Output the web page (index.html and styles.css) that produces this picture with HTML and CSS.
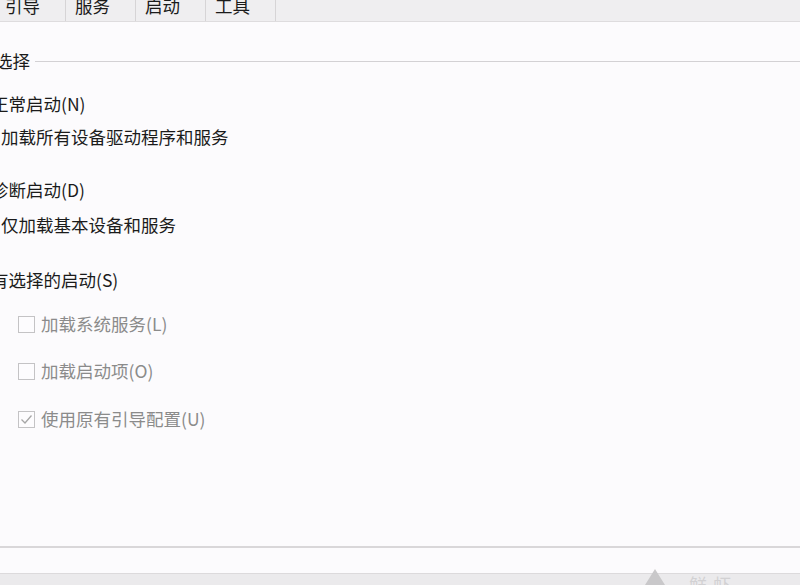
FILE: index.html
```html
<!DOCTYPE html>
<html lang="zh-CN">
<head>
<meta charset="utf-8">
<link rel="stylesheet" href="styles.css">
</head>
<body>
<div class="window">
  <div class="tabs">
    <div class="tab first">引导</div>
    <div class="tab">服务</div>
    <div class="tab">启动</div>
    <div class="tab">工具</div>
  </div>
  <div class="group">
    <div class="legend"><span class="legend-text">选择</span><span class="legend-line"></span></div>
    <div class="radio r1">正常启动(N)</div>
    <div class="desc d1">加载所有设备驱动程序和服务</div>
    <div class="radio r2">诊断启动(D)</div>
    <div class="desc d2">仅加载基本设备和服务</div>
    <div class="radio r3">有选择的启动(S)</div>
    <div class="check c1"><span class="box"></span><span class="label">加载系统服务(L)</span></div>
    <div class="check c2"><span class="box"></span><span class="label">加载启动项(O)</span></div>
    <div class="check c3"><span class="box"><svg width="15" height="15" viewBox="0 0 15 15"><path d="M2.5 7.5 L6 11 L12.5 3.5" fill="none" stroke="#a6a6a6" stroke-width="1.3"/></svg></span><span class="label">使用原有引导配置(U)</span></div>
  </div>
  <div class="spacer"></div>
  <div class="footer">
    <div class="watermark">
      <span class="wm-tri"></span>
      <span class="wm-text">鲜虾</span>
    </div>
  </div>
</div>
</body>
</html>
```
FILE: styles.css
```css
html, body {
  margin: 0;
  padding: 0;
  background: #fcfbfd;
  overflow: hidden;
}
.window {
  width: 800px;
  height: 585px;
  display: flex;
  flex-direction: column;
  font-family: "Noto Sans CJK SC", "Noto Sans", sans-serif;
  color: #1b1b1b;
  overflow: hidden;
}
.tabs {
  height: 21px;
  flex: none;
  display: flex;
  background: #efeef0;
  border-bottom: 1px solid #dedcde;
  overflow: hidden;
}
.tab {
  width: 70px;
  flex: none;
  box-sizing: border-box;
  padding-left: 9px;
  font-size: 17.5px;
  line-height: 20px;
  margin-top: -4px;
  height: 25px;
  border-right: 1px solid #d6d4d6;
  color: #1b1b1b;
}
.tab.first {
  margin-left: -4px;
}
.group {
  height: 526px;
  flex: none;
  box-sizing: border-box;
  border-bottom: 2px solid #d9d7d9;
  padding-top: 29px;
  display: flex;
  flex-direction: column;
  font-size: 17.5px;
  line-height: 20px;
}
.legend {
  display: flex;
  align-items: center;
  margin-left: -5px;
  height: 20px;
}
.legend-text {
  flex: none;
}
.legend-line {
  flex: 1;
  height: 1px;
  background: #d3d1d4;
  margin-left: 5px;
}
.radio {
  margin-left: -9px;
  height: 20px;
  white-space: nowrap;
}
.desc {
  margin-left: 1px;
  height: 20px;
  white-space: nowrap;
}
.r1 { margin-top: 23px; }
.d1 { margin-top: 13px; }
.r2 { margin-top: 33px; }
.d2 { margin-top: 15px; }
.r3 { margin-top: 35px; }
.check {
  display: flex;
  align-items: center;
  height: 20px;
  margin-left: 18px;
  color: #8b8b8b;
}
.c1 { margin-top: 24px; }
.c2 { margin-top: 27px; }
.c3 { margin-top: 28px; }
.box {
  width: 15px;
  height: 15px;
  border: 1px solid #c4c3c5;
  background: #fdfcfe;
  flex: none;
  display: flex;
  margin-right: 6px;
}
.label {
  white-space: nowrap;
}
.spacer {
  height: 25px;
  flex: none;
}
.footer {
  flex: 1;
  background: #ebeaec;
  border-top: 1px solid #dcdadc;
  position: relative;
}
.watermark {
  position: absolute;
  left: 645px;
  top: 0;
  display: flex;
  align-items: flex-end;
  gap: 24px;
}
.wm-tri {
  width: 0;
  height: 0;
  border-left: 10px solid transparent;
  border-right: 10px solid transparent;
  border-bottom: 16px solid #c9c8ca;
  margin-top: -5px;
}
.wm-text {
  font-size: 18px;
  line-height: 18px;
  color: #d2d1d3;
  letter-spacing: 6px;
  margin-bottom: -8px;
}
```
